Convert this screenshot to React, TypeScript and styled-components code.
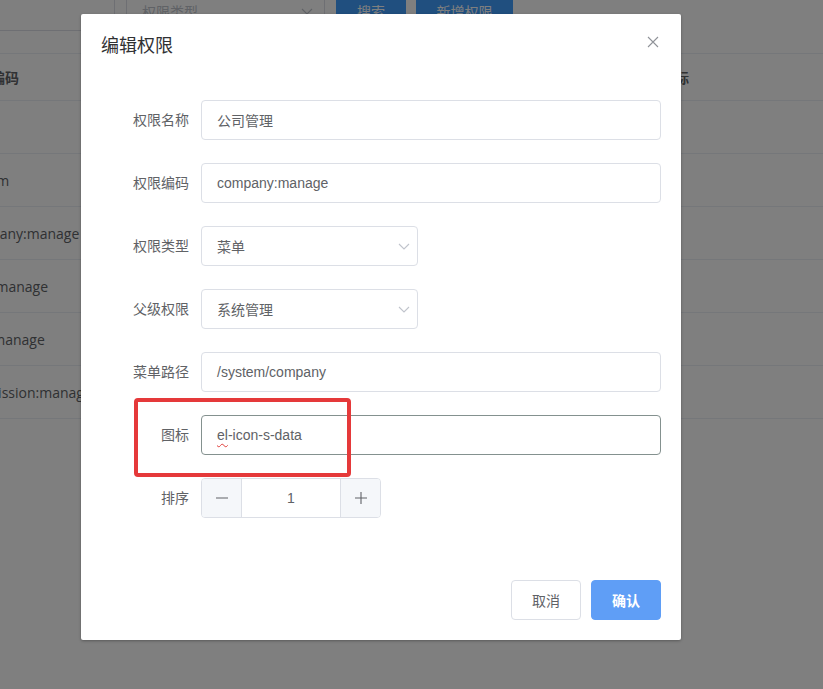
import React from "react";
import styled, { createGlobalStyle } from "styled-components";

const GlobalStyle = createGlobalStyle`
  html, body { margin: 0; padding: 0; }
  body { overflow: hidden; background: #fff; }
  * { box-sizing: border-box; }
`;

const UI_FONT = `"Liberation Sans", "Noto Sans CJK SC", sans-serif`;
const TABLE_FONT = `"Open Sans", "Noto Sans CJK SC", sans-serif`;

/* ---------- page behind the dialog ---------- */
const Page = styled.div`
  position: relative;
  width: 823px;
  height: 689px;
  overflow: hidden;
  background: #fff;
`;

const Scrolled = styled.div`
  margin: -9px 0 0 -50px;
  width: 1000px;
  font-family: ${TABLE_FONT};
`;

const Toolbar = styled.div`
  display: flex;
  align-items: center;
  height: 40px;
`;

const FilterInput = styled.div<{ $w: number; $gap?: number }>`
  width: ${(p) => p.$w}px;
  height: 40px;
  margin-right: ${(p) => p.$gap ?? 11}px;
  border: 1px solid #dcdfe6;
  border-radius: 4px;
  display: flex;
  align-items: center;
  justify-content: space-between;
  padding: 0 10px 0 15px;
  font-family: ${UI_FONT};
  font-size: 14px;
  color: #c0c4cc;
`;

const ToolButton = styled.div<{ $w: number }>`
  width: ${(p) => p.$w}px;
  height: 40px;
  margin-right: 10px;
  border-radius: 4px;
  background: #409eff;
  color: #fff;
  font-family: ${UI_FONT};
  font-size: 14px;
  display: flex;
  align-items: center;
  justify-content: center;
`;

const Table = styled.div`
  margin-top: 22px;
  display: grid;
  grid-template-columns: 220px 130px 100px 248px 302px;
  font-size: 14px;
`;

const HeadCell = styled.div`
  height: 48px;
  display: flex;
  align-items: center;
  padding-left: 13px;
  font-weight: 700;
  color: #606266;
  border-top: 1px solid #ebeef5;
  border-bottom: 1px solid #ebeef5;
`;

const Cell = styled.div`
  height: 53px;
  display: flex;
  align-items: center;
  padding-left: 13px;
  color: #606266;
  white-space: nowrap;
  border-bottom: 1px solid #ebeef5;
`;

/* ---------- mask + dialog ---------- */
const Mask = styled.div`
  position: absolute;
  inset: 0;
  background: rgba(0, 0, 0, 0.5);
`;

const Dialog = styled.div`
  position: relative;
  width: 600px;
  margin: 14px 0 0 81px;
  background: #fff;
  border-radius: 2px;
  box-shadow: 0 1px 3px rgba(0, 0, 0, 0.3);
  font-family: ${UI_FONT};
`;

const Header = styled.div`
  position: relative;
  padding: 20px 20px 10px;
`;

const Title = styled.div`
  font-size: 18px;
  line-height: 24px;
  color: #303133;
`;

const CloseBtn = styled.div`
  position: absolute;
  top: 22px;
  right: 22px;
  width: 12px;
  height: 12px;
  display: flex;
`;

const Body = styled.div`
  padding: 32px 20px 29px;
`;

const FormItem = styled.div`
  display: flex;
  align-items: center;
  margin-bottom: 23px;
`;

const Label = styled.div`
  width: 100px;
  padding-right: 12px;
  text-align: right;
  font-size: 14px;
  line-height: 40px;
  color: #606266;
`;

const Field = styled.div<{ $w?: number; $active?: boolean }>`
  width: ${(p) => (p.$w ? `${p.$w}px` : "460px")};
  height: 40px;
  border: 1px solid ${(p) => (p.$active ? "#84918f" : "#dcdfe6")};
  border-radius: 4px;
  display: flex;
  align-items: center;
  justify-content: space-between;
  padding: 0 6px 0 15px;
  font-size: 14px;
  color: #606266;
  background: #fff;
`;

const Squiggle = styled.span`
  text-decoration: underline wavy #e0403c;
  text-decoration-thickness: 1px;
  text-underline-offset: 3px;
`;

const NumberBox = styled.div`
  width: 180px;
  height: 40px;
  border: 1px solid #dcdfe6;
  border-radius: 4px;
  display: flex;
  overflow: hidden;
`;

const StepBtn = styled.div<{ $side: "left" | "right" }>`
  width: 40px;
  height: 100%;
  background: #f5f7fa;
  display: flex;
  align-items: center;
  justify-content: center;
  ${(p) =>
    p.$side === "left"
      ? "border-right: 1px solid #dcdfe6;"
      : "border-left: 1px solid #dcdfe6;"}
`;

const NumberValue = styled.div`
  flex: 1;
  display: flex;
  align-items: center;
  justify-content: center;
  font-size: 14px;
  color: #606266;
`;

const Footer = styled.div`
  display: flex;
  justify-content: flex-end;
  gap: 10px;
  padding: 10px 20px 20px;
`;

const Button = styled.div<{ $primary?: boolean }>`
  height: 40px;
  padding: 0 20px;
  border-radius: 4px;
  border: 1px solid ${(p) => (p.$primary ? "#5f9ef6" : "#dcdfe6")};
  background: ${(p) => (p.$primary ? "#5f9ef6" : "#fff")};
  color: ${(p) => (p.$primary ? "#fff" : "#606266")};
  font-size: 14px;
  font-weight: ${(p) => (p.$primary ? 600 : 400)};
  display: flex;
  align-items: center;
  justify-content: center;
`;

const Highlight = styled.div`
  position: absolute;
  left: 134px;
  top: 398px;
  width: 217px;
  height: 79px;
  border: 4px solid #e5393a;
  border-radius: 4px;
`;

const Chevron = () => (
  <svg width="14" height="14" viewBox="0 0 14 14">
    <polyline points="2,5 7,10 12,5" fill="none" stroke="#c0c4cc" strokeWidth="1.1" />
  </svg>
);

const CloseIcon = () => (
  <svg width="12" height="12" viewBox="0 0 12 12">
    <path d="M1 1 L11 11 M11 1 L1 11" stroke="#909399" strokeWidth="1.1" fill="none" />
  </svg>
);

const MinusIcon = () => (
  <svg width="14" height="14" viewBox="0 0 14 14">
    <path d="M1 7 H13" stroke="#606266" strokeWidth="1.1" />
  </svg>
);

const PlusIcon = () => (
  <svg width="14" height="14" viewBox="0 0 14 14">
    <path d="M1 7 H13 M7 1 V13" stroke="#606266" strokeWidth="1.1" />
  </svg>
);

const rows = [
  ["", "系统管理", "目录", ""],
  ["system", "用户管理", "菜单", "/system/user"],
  ["company:manage", "公司管理", "菜单", "/system/company"],
  ["user:manage", "部门管理", "菜单", "/system/dept"],
  ["role:manage", "角色管理", "菜单", "/system/role"],
  ["permission:manage", "权限管理", "菜单", "/system/permission"],
];

export default function App() {
  return (
    <>
      <GlobalStyle />
      <Page>
        <Scrolled>
          <Toolbar>
            <FilterInput $w={165} $gap={11} />
            <FilterInput $w={199}>
              <span>权限类型</span>
              <Chevron />
            </FilterInput>
            <ToolButton $w={70}>搜索</ToolButton>
            <ToolButton $w={97}>新增权限</ToolButton>
          </Toolbar>
          <Table>
            <HeadCell>权限编码</HeadCell>
            <HeadCell>权限名称</HeadCell>
            <HeadCell>类型</HeadCell>
            <HeadCell>路径</HeadCell>
            <HeadCell>图标</HeadCell>
            {rows.map((r, i) => (
              <React.Fragment key={i}>
                {r.map((c, j) => (
                  <Cell key={j}>{c}</Cell>
                ))}
                <Cell />
              </React.Fragment>
            ))}
          </Table>
        </Scrolled>

        <Mask>
          <Dialog>
            <Header>
              <Title>编辑权限</Title>
              <CloseBtn>
                <CloseIcon />
              </CloseBtn>
            </Header>
            <Body>
              <FormItem>
                <Label>权限名称</Label>
                <Field>公司管理</Field>
              </FormItem>
              <FormItem>
                <Label>权限编码</Label>
                <Field>company:manage</Field>
              </FormItem>
              <FormItem>
                <Label>权限类型</Label>
                <Field $w={217}>
                  <span>菜单</span>
                  <Chevron />
                </Field>
              </FormItem>
              <FormItem>
                <Label>父级权限</Label>
                <Field $w={217}>
                  <span>系统管理</span>
                  <Chevron />
                </Field>
              </FormItem>
              <FormItem>
                <Label>菜单路径</Label>
                <Field>/system/company</Field>
              </FormItem>
              <FormItem>
                <Label>图标</Label>
                <Field $active>
                  <span>
                    <Squiggle>el</Squiggle>-icon-s-data
                  </span>
                </Field>
              </FormItem>
              <FormItem>
                <Label>排序</Label>
                <NumberBox>
                  <StepBtn $side="left">
                    <MinusIcon />
                  </StepBtn>
                  <NumberValue>1</NumberValue>
                  <StepBtn $side="right">
                    <PlusIcon />
                  </StepBtn>
                </NumberBox>
              </FormItem>
            </Body>
            <Footer>
              <Button>取消</Button>
              <Button $primary>确认</Button>
            </Footer>
          </Dialog>
        </Mask>
        <Highlight />
      </Page>
    </>
  );
}
